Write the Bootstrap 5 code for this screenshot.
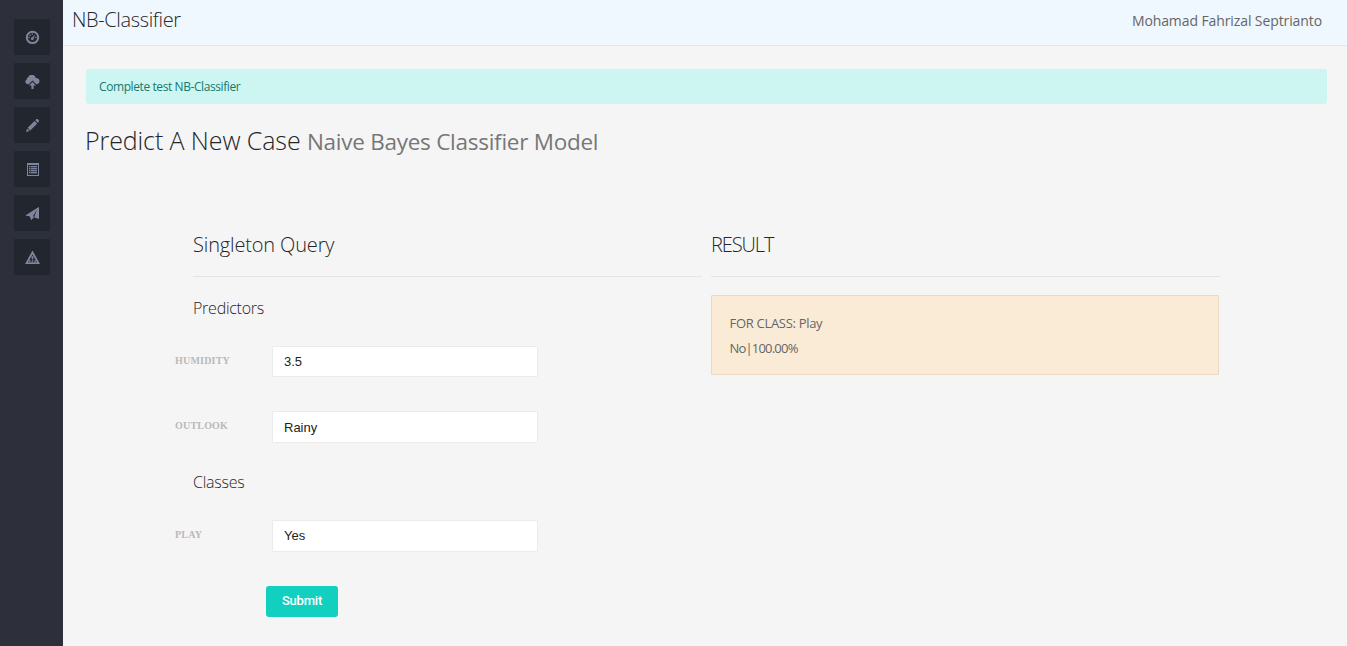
<!DOCTYPE html>
<html lang="en">
<head>
<meta charset="utf-8">
<meta name="viewport" content="width=device-width, initial-scale=1">
<title>NB-Classifier</title>
<link href="https://cdn.jsdelivr.net/npm/bootstrap@5.3.0/dist/css/bootstrap.min.css" rel="stylesheet">
<style>
body{font-family:"Open Sans","Noto Sans",sans-serif;font-size:13px;background:#f5f5f5;color:#666;overflow:hidden}
h1,h2,h3,.navbar-brand{font-weight:300;color:#262626;margin:0;white-space:nowrap}
.sidebar{width:63px;background:#2d303b;padding:19px 13px 0 14px;gap:8px}
.sidebar a{width:36px;height:36px;background:#22262e;color:#7f859c}
.sidebar svg{width:15px;height:15px;fill:currentColor;margin:1px 0 0 1px}
.sidebar svg.low{margin-top:3px}
.topbar{height:46px;background:#eff7ff;border-bottom:1px solid #e4e7ea;padding:0 25px 0 9px}
.navbar-brand{font-size:20px;line-height:40px;height:45px;padding:0;letter-spacing:-.36px}
.user-name{font-size:14px;line-height:42px;height:45px;letter-spacing:-.1px}
.content{padding:23px 20px 0 23px}
.notice{height:35px;line-height:35px;padding:0 13px;background:#cdf5f1;color:#15796f;border:0;border-radius:3px;font-size:12px;letter-spacing:-.41px;margin:0}
.page-title{font-size:25px;line-height:38px;height:40px;margin-top:17px;margin-left:-1px;letter-spacing:-.1px}
.page-title small{font-size:22.5px;font-weight:400;color:#777;letter-spacing:-.26px}
.panels{margin:62px 0 0 107px;gap:9px}
.panel-col{width:509px}
.panel-title{font-size:20px;line-height:40px;height:54px;border-bottom:1px solid #e5e5e5;padding-top:2px;letter-spacing:-.15px}
.panel-title.upper{letter-spacing:-1.1px}
.sub-title{font-size:16px;line-height:24px;letter-spacing:-.25px}
.form-line{margin-left:-18px;height:31px}
.form-line label{width:97px;font:bold 10px/30px "Liberation Serif",serif;color:#b9b9b9;text-transform:uppercase;letter-spacing:.2px}
.form-line .form-control{width:266px;height:100%;border:1px solid #ebebeb;border-radius:1px;padding:0 11px;font:13px/29px "Liberation Sans",sans-serif;color:#222}
.form-line .form-control.raised{padding-bottom:2px}
.tall{height:32px}
.btn-submit{width:72px;height:31px;background:#12d0bf;color:#fff;border:0;border-radius:3px;padding:0 0 2px;font:500 13px/29px Roboto,sans-serif;letter-spacing:-.2px;margin:34px 0 0 73px}
.result{margin-top:18px;width:508px;height:80px;background:#faebd7;border:1px solid #ead9c4;border-radius:1px;padding:15px 17.5px;line-height:25px;letter-spacing:-.3px}
.score{letter-spacing:-.8px}
</style>
</head>
<body>
<div class="d-flex vh-100">
  <nav class="sidebar d-flex flex-column flex-shrink-0">
    <a href="#" class="d-flex align-items-center justify-content-center" aria-label="Dashboard"><svg viewBox="0 0 15 15"><path fill-rule="evenodd" d="M7.5.7a6.7 6.7 0 1 0 0 13.4 6.7 6.7 0 0 0 0-13.4zm0 2a4.7 4.7 0 1 1 0 9.4 4.7 4.7 0 0 1 0-9.4z"/><path d="M10.4 4.4 8.6 8.2a1.4 1.4 0 1 1-1.4-1z"/><circle cx="7.3" cy="4.1" r=".8"/><circle cx="5" cy="5.2" r=".8"/><circle cx="4.1" cy="7.5" r=".8"/><circle cx="10.9" cy="7.5" r=".8"/></svg></a>
    <a href="#" class="d-flex align-items-center justify-content-center" aria-label="Upload"><svg class="low" viewBox="0 0 15 15"><path d="M3.700 9.200H3.100A2.600 2.600 0 0 1 1.600 4.400 2.400 2.400 0 0 1 3.200 2.200 4 4 0 0 1 10.800 3a3.300 3.300 0 0 1 3.700 3.300c0 1.700-1.300 2.900-3.200 2.900L7.500 5.400z"/><path d="M7.500 6.900 11 10.500H8.600V14H6.400v-3.500H4z"/></svg></a>
    <a href="#" class="d-flex align-items-center justify-content-center" aria-label="Edit"><svg viewBox="0 0 15 15"><path d="M1 14l1.1-3.6 2.5 2.5zM2.700 9.800l6.800-6.900L12.200 5.600l-6.900 6.800zM10.300 2.300l1-1c.5-.5 1.100-.5 1.600 0l.9.9c.5.5.5 1.100 0 1.600l-1 1z"/></svg></a>
    <a href="#" class="d-flex align-items-center justify-content-center" aria-label="Data list"><svg viewBox="0 0 15 15"><path fill-rule="evenodd" d="M2 1h12v13H2zm1 2v10h10V3z"/><path d="M4 4h1v1H4zm2 0h6v1H6zM4 6h1v1H4zm2 0h6v1H6zM4 8h1v1H4zm2 0h6v1H6zM4 10h1v1H4zm2 0h6v1H6z"/><path opacity=".35" d="M4 4h8v8H4z"/></svg></a>
    <a href="#" class="d-flex align-items-center justify-content-center" aria-label="Predict"><svg viewBox="0 0 15 15"><path d="M14 1v12L9 11.300l3.300-8-6.200 6.300v4.200L4.800 10.200.6 9.400z"/><path d="M14 1 .6 9.400l4.200.8z"/><path d="M13.200 2.200 8 10.100l1 1.200-2.900 3-.5-4.700z"/></svg></a>
    <a href="#" class="d-flex align-items-center justify-content-center" aria-label="Tests"><svg viewBox="0 0 15 15"><path fill-rule="evenodd" d="M7.500.5 15 14H0zm0 4L3 12.200h9z"/><path d="M6.400 6.300h2.200l-.5 3.200H6.900zM6.700 10.200h1.600v1.600H6.700zM4 10.200h1.600v1.600H4zm5.400 0H11v1.600H9.400z"/></svg></a>
  </nav>
  <div class="flex-grow-1">
    <header class="topbar d-flex justify-content-between">
      <span class="navbar-brand">NB-Classifier</span>
      <span class="user-name">Mohamad Fahrizal Septrianto</span>
    </header>
    <main class="content">
      <div class="alert notice">Complete test NB-Classifier</div>
      <h1 class="page-title">Predict A New Case <small>Naive Bayes Classifier Model</small></h1>
      <div class="panels d-flex">
        <section class="panel-col">
          <h2 class="panel-title">Singleton Query</h2>
          <form>
            <h3 class="sub-title" style="margin-top:19px">Predictors</h3>
            <div class="form-line d-flex" style="margin-top:26px"><label for="humidity">Humidity</label><input class="form-control" id="humidity" value="3.5"></div>
            <div class="form-line tall d-flex" style="margin-top:34px"><label for="outlook">Outlook</label><input class="form-control" id="outlook" value="Rainy"></div>
            <h3 class="sub-title" style="margin-top:27px">Classes</h3>
            <div class="form-line tall d-flex" style="margin-top:26px"><label for="play">Play</label><input class="form-control raised" id="play" value="Yes"></div>
            <button type="button" class="btn btn-submit">Submit</button>
          </form>
        </section>
        <section class="panel-col">
          <h2 class="panel-title upper">RESULT</h2>
          <div class="result"><div>FOR CLASS: Play</div><div class="score">No|100.00%</div></div>
        </section>
      </div>
    </main>
  </div>
</div>
<script src="https://cdn.jsdelivr.net/npm/bootstrap@5.3.0/dist/js/bootstrap.bundle.min.js"></script>
</body>
</html>
